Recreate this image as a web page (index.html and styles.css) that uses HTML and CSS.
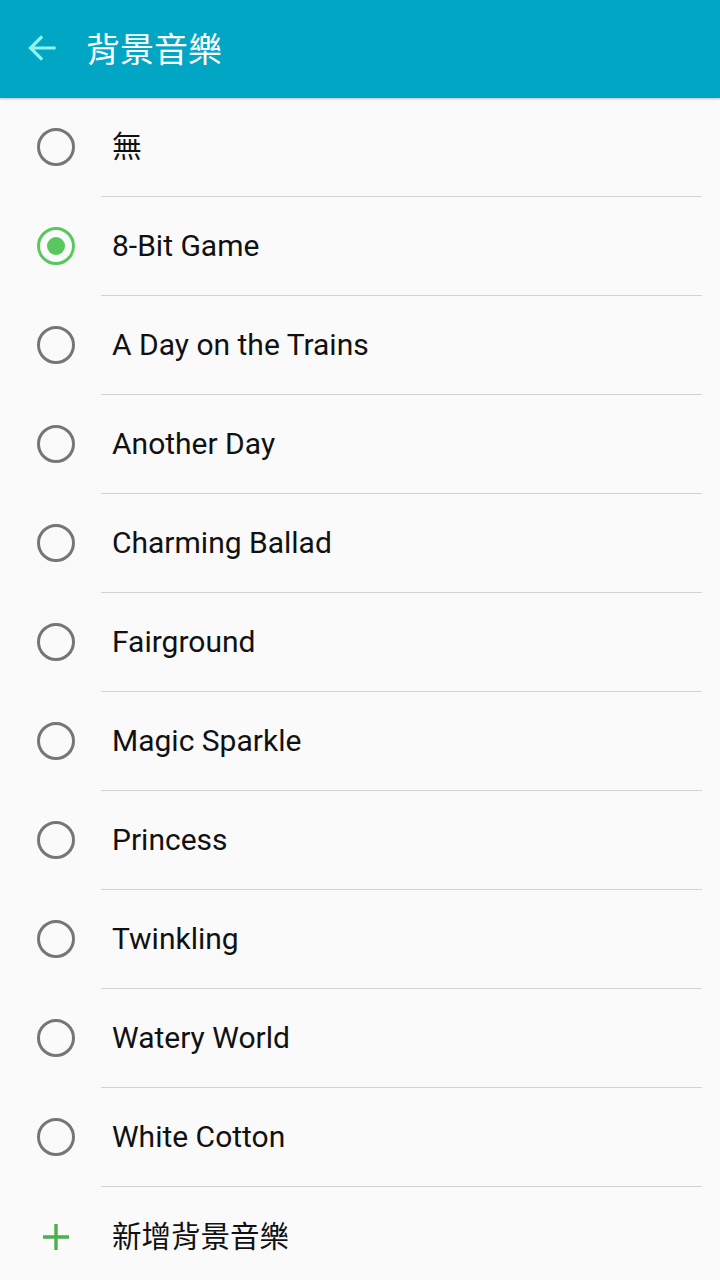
FILE: index.html
```html
<!DOCTYPE html>
<html lang="zh-Hant">
<head>
<meta charset="utf-8">
<link rel="stylesheet" href="styles.css">
</head>
<body>
<header class="appbar">
  <svg class="back" width="32" height="32" viewBox="0 0 32 32">
    <path d="M28 16H5M15 5.5L4.5 16L15 26.5" fill="none" stroke="#8ff3ee" stroke-width="3.2" stroke-linecap="square"/>
  </svg>
  <h1 class="title">背景音樂</h1>
</header>
<ul class="list">
  <li class="row"><span class="radio"></span><span class="label">無</span></li>
  <li class="row"><span class="radio on"></span><span class="label">8-Bit Game</span></li>
  <li class="row"><span class="radio"></span><span class="label">A Day on the Trains</span></li>
  <li class="row"><span class="radio"></span><span class="label">Another Day</span></li>
  <li class="row"><span class="radio"></span><span class="label">Charming Ballad</span></li>
  <li class="row"><span class="radio"></span><span class="label">Fairground</span></li>
  <li class="row"><span class="radio"></span><span class="label">Magic Sparkle</span></li>
  <li class="row"><span class="radio"></span><span class="label">Princess</span></li>
  <li class="row"><span class="radio"></span><span class="label">Twinkling</span></li>
  <li class="row"><span class="radio"></span><span class="label">Watery World</span></li>
  <li class="row"><span class="radio"></span><span class="label">White Cotton</span></li>
  <li class="row add">
    <svg class="plus" width="38" height="38" viewBox="0 0 38 38">
      <path d="M19 6V32M6 19H32" stroke="#4caf50" stroke-width="3.4"/>
    </svg>
    <span class="label">新增背景音樂</span>
  </li>
</ul>
</body>
</html>
```
FILE: styles.css
```css
* { box-sizing: border-box; }
html, body { margin: 0; padding: 0; }
body {
  width: 720px;
  height: 1280px;
  overflow: hidden;
  background: #fafafa;
  font-family: Roboto, "Noto Sans CJK TC", sans-serif;
  color: #111;
}
.appbar {
  height: 98px;
  background: #00a6c4;
  display: flex;
  align-items: center;
  padding-left: 26px;
  box-shadow: 0 1px 2px rgba(0,0,0,0.25);
  position: relative;
  z-index: 1;
}
.back { display: block; margin-top: -2px; }
.title {
  margin: 0 0 0 28px;
  font-family: "Noto Sans CJK TC", sans-serif;
  font-weight: 400;
  font-size: 34px;
  color: #fff;
  line-height: 1;
  margin-top: -2px;
}
.list { list-style: none; margin: 0; padding: 0; }
.row {
  height: 99px;
  display: flex;
  align-items: center;
  padding-left: 37px;
  position: relative;
}
.row::after {
  content: "";
  position: absolute;
  left: 101px;
  right: 18px;
  bottom: 0;
  height: 1px;
  background: #d2d2d2;
}
.row.add::after { display: none; }
.radio {
  width: 38px;
  height: 38px;
  border: 3px solid #767676;
  border-radius: 50%;
  display: flex;
  align-items: center;
  justify-content: center;
  flex: none;
  margin-top: -1px;
}
.radio.on { border-color: #58c75c; }
.radio.on::before {
  content: "";
  width: 18px;
  height: 18px;
  border-radius: 50%;
  background: #58c75c;
}
.label {
  margin-left: 37px;
  font-size: 30px;
  line-height: 1;
  margin-top: -1px;
}
.plus { flex: none; display: block; }
.add .label {
  font-family: "Noto Sans CJK TC", sans-serif;
  font-size: 29.5px;
  margin-top: -4px;
}
```
